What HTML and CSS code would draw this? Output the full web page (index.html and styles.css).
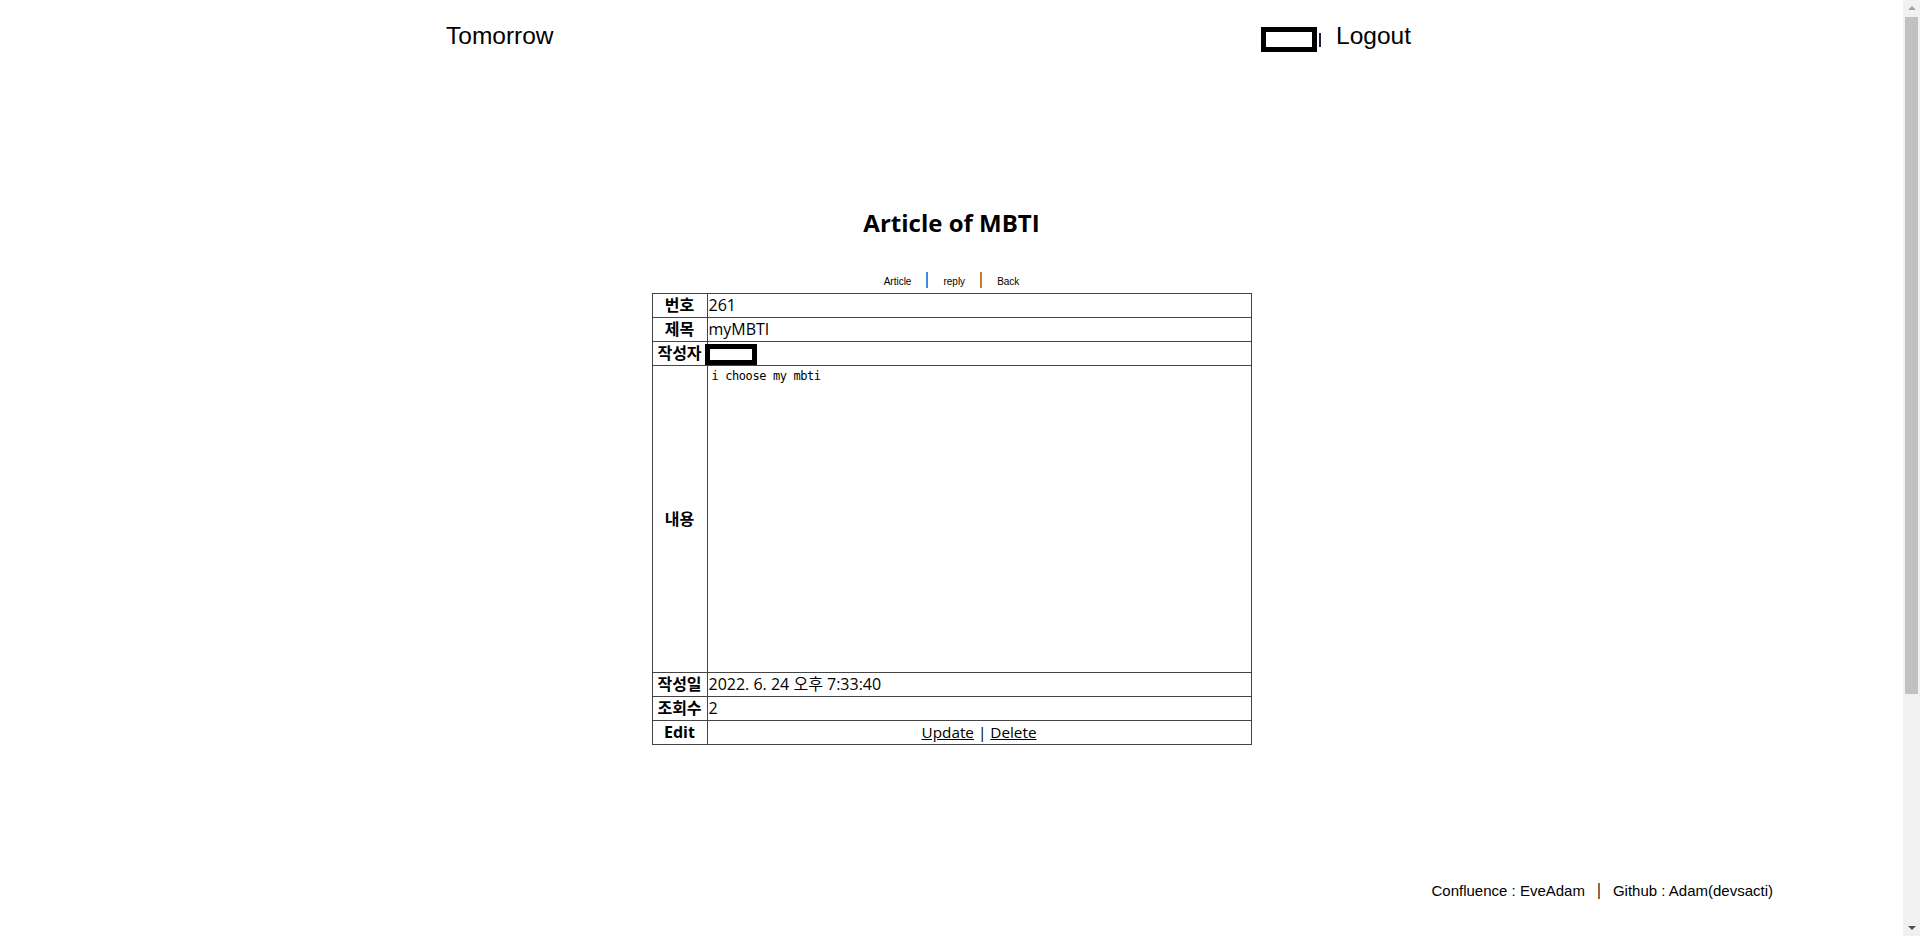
FILE: index.html
```html
<!DOCTYPE html>
<html lang="ko">
<head>
<meta charset="utf-8">
<title>Article of MBTI</title>
<link rel="stylesheet" href="styles.css">
</head>
<body>
<div class="page">
  <header class="header">
    <a class="brand" href="#">Tomorrow</a>
    <div class="user">
      <span class="user-box"></span>
      <span class="caret"></span>
      <a class="logout" href="#">Logout</a>
    </div>
  </header>
  <main class="main">
    <h2 class="title">Article of MBTI</h2>
    <nav class="subnav">
      <a class="subnav-link" href="#">Article</a>
      <span class="sep sep-blue"></span>
      <a class="subnav-link" href="#">reply</a>
      <span class="sep sep-orange"></span>
      <a class="subnav-link" href="#">Back</a>
    </nav>
    <table class="article">
      <colgroup><col class="col-label"><col class="col-value"></colgroup>
      <tr><th>번호</th><td>261</td></tr>
      <tr><th>제목</th><td>myMBTI</td></tr>
      <tr><th>작성자</th><td><span class="writer-box"></span></td></tr>
      <tr><th>내용</th><td class="body-cell"><div class="content">i choose my mbti</div></td></tr>
      <tr><th>작성일</th><td>2022. 6. 24 오후 7:33:40</td></tr>
      <tr><th>조회수</th><td>2</td></tr>
      <tr><th>Edit</th><td class="edit-cell"><a href="#">Update</a> | <a href="#">Delete</a></td></tr>
    </table>
  </main>
  <footer class="footer">
    <span>Confluence : EveAdam</span>
    <span class="footer-sep"></span>
    <span>Github : Adam(devsacti)</span>
  </footer>
</div>
<div class="scrollbar" aria-hidden="true">
  <span class="sb-arrow sb-up"></span>
  <span class="sb-thumb"></span>
  <span class="sb-arrow sb-down"></span>
</div>
</body>
</html>
```
FILE: styles.css
```css
html, body {
  margin: 0;
  padding: 0;
  background: #fff;
  color: #000;
}
body {
  font-family: "Open Sans", "Noto Sans CJK KR", sans-serif;
}
a {
  color: #000;
}
.page {
  width: 1903px;
  padding-bottom: 345px;
}
.header {
  display: flex;
  justify-content: space-between;
  align-items: flex-start;
  width: 965px;
  padding: 22px 0 0 446px;
  font-family: "Liberation Sans", Arial, sans-serif;
  font-size: 24.5px;
  line-height: 28px;
}
.brand, .logout {
  text-decoration: none;
  color: #000;
}
.user {
  display: flex;
  align-items: flex-start;
}
.user-box {
  display: block;
  width: 56px;
  height: 25px;
  box-sizing: border-box;
  border: 5px solid #000;
  margin-top: 5px;
}
.caret {
  display: block;
  width: 2px;
  height: 14px;
  background: #1b2440;
  margin: 11px 0 0 2px;
}
.logout {
  margin-left: 15px;
}
.main {
  padding-top: 155px;
  display: flex;
  flex-direction: column;
  align-items: center;
}
.title {
  margin: 0;
  font-family: "Open Sans", "Noto Sans CJK KR", sans-serif;
  font-weight: 700;
  font-size: 24px;
  line-height: 32px;
}
.subnav {
  display: flex;
  align-items: flex-start;
  margin-top: 33px;
  height: 16px;
  font-family: "Liberation Sans", Arial, sans-serif;
  font-size: 10px;
  line-height: 16px;
}
.subnav-link {
  color: #000;
  text-decoration: none;
  padding: 2px 15px 0;
}
.sep {
  display: block;
  width: 2px;
  height: 16px;
}
.sep-blue { background: #3b8ed8; }
.sep-orange { background: #c27a2e; }
.article {
  margin-top: 5px;
  width: 600px;
  table-layout: fixed;
  border-collapse: collapse;
  border: 1px solid #444;
  font-size: 16px;
  line-height: 23px;
}
.col-label { width: 55px; }
.article th, .article td {
  border: 1px solid #444;
  padding: 0 1px;
  white-space: nowrap;
}
.article th {
  font-weight: 700;
  text-align: center;
}
.article td {
  text-align: left;
}
.writer-box {
  display: inline-block;
  vertical-align: top;
  width: 52px;
  height: 21px;
  margin: 2px 0 -1px -4px;
  box-sizing: border-box;
  border: 5px solid #000;
  background: #fff;
  position: relative;
}
.body-cell {
  vertical-align: top;
}
.content {
  height: 306px;
  box-sizing: border-box;
  padding: 3px 3px 0;
  font-family: "DejaVu Sans Mono", monospace;
  font-size: 12px;
  letter-spacing: -0.4px;
  line-height: 14px;
  white-space: pre-wrap;
}
.article td.edit-cell {
  text-align: center;
  font-size: 15.3px;
}
.footer {
  display: flex;
  justify-content: flex-end;
  align-items: center;
  margin-top: 137px;
  padding-right: 130px;
  font-family: "Liberation Sans", Arial, sans-serif;
  font-size: 15px;
  line-height: 18px;
}
.footer-sep {
  display: block;
  width: 2px;
  height: 16px;
  background: #9a6a34;
  margin: 0 13px;
}
.scrollbar {
  position: fixed;
  top: 0;
  right: 0;
  width: 17px;
  height: 936px;
  background: #f1f1f1;
  display: flex;
  flex-direction: column;
  align-items: center;
}
.sb-arrow {
  display: block;
  width: 0;
  height: 0;
  border-left: 4px solid transparent;
  border-right: 4px solid transparent;
}
.sb-up {
  border-bottom: 4px solid #a3a3a3;
  margin: 6px 0 7px;
}
.sb-thumb {
  display: block;
  width: 13px;
  height: 677px;
  background: #c1c1c1;
}
.sb-down {
  border-top: 4px solid #505050;
  margin-top: auto;
  margin-bottom: 6px;
}
```
